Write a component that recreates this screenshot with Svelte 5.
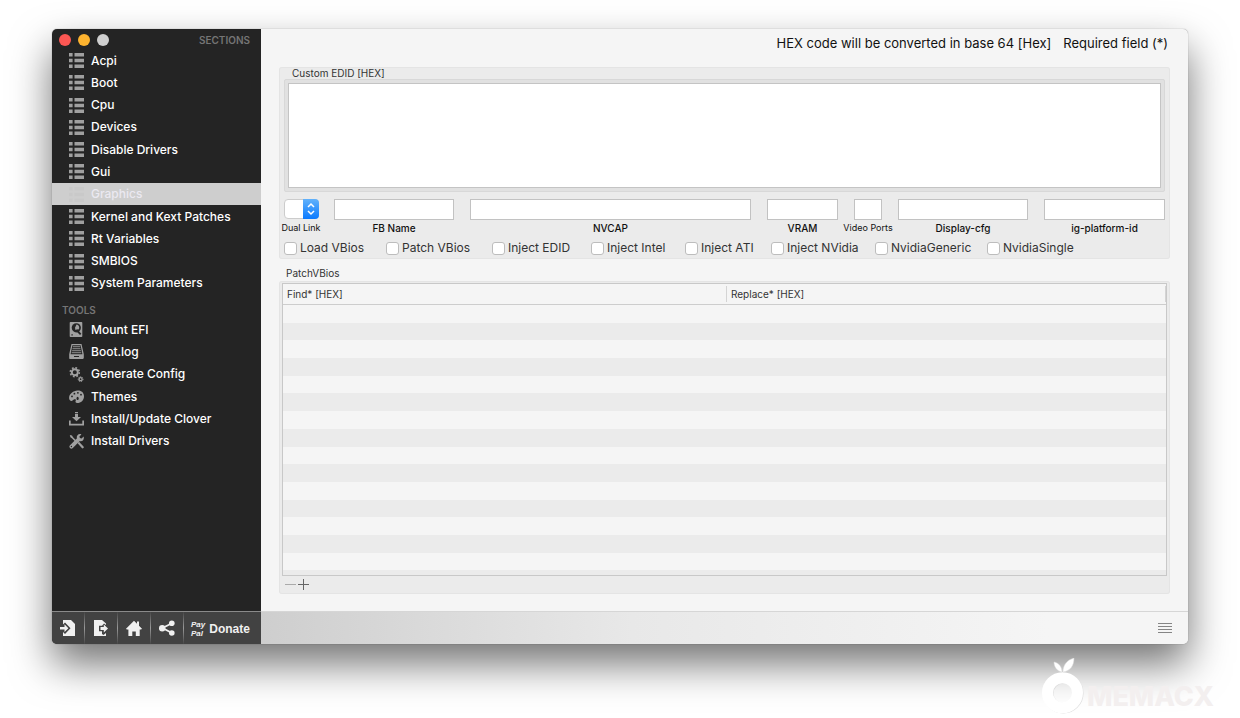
<script lang="ts">
    const sections = ['Acpi', 'Boot', 'Cpu', 'Devices', 'Disable Drivers', 'Gui', 'Graphics', 'Kernel and Kext Patches', 'Rt Variables', 'SMBIOS', 'System Parameters'];

    const tools = [
        { name: 'Mount EFI', icon: 'disk' },
        { name: 'Boot.log', icon: 'log' },
        { name: 'Generate Config', icon: 'gears' },
        { name: 'Themes', icon: 'palette' },
        { name: 'Install/Update Clover', icon: 'download' },
        { name: 'Install Drivers', icon: 'wrench' },
    ];

    const fields = [
        { id: 'fbname', label: 'FB Name' },
        { id: 'nvcap', label: 'NVCAP' },
        { id: 'vram', label: 'VRAM' },
        { id: 'ports', label: 'Video Ports', small: true },
        { id: 'display', label: 'Display-cfg' },
        { id: 'platform', label: 'ig-platform-id' },
    ];

    const checks = ['Load VBios', 'Patch VBios', 'Inject EDID', 'Inject Intel', 'Inject ATI', 'Inject NVidia', 'NvidiaGeneric', 'NvidiaSingle'];

    let active = 'Graphics';
</script>

<div class="page">
    <div class="window">
        <aside>
            <header>
                <div class="lights">
                    <button class="red" aria-label="Close"></button>
                    <button class="yellow" aria-label="Minimize"></button>
                    <button class="gray" aria-label="Zoom"></button>
                </div>
                <h2>SECTIONS</h2>
            </header>

            <nav class="sections">
                {#each sections as name}
                <button class="item" class:active={active === name} on:click={() => active = name}>
                    <svg viewBox="0 0 15 15" fill="currentColor">
                        <path d="M0 0h3.600v3.600H0zM5.500 0H15v3.600H5.500zM0 5.700h3.600v3.600H0zM5.500 5.700H15v3.600H5.500zM0 11.400h3.600V15H0zM5.500 11.400H15V15H5.500z" />
                    </svg>
                    {name}
                </button>
                {/each}
            </nav>

            <h2 class="toolsTitle">TOOLS</h2>

            <nav class="tools">
                {#each tools as tool}
                <button class="item">
                    <svg viewBox="0 0 15 15" fill="currentColor">
                        {#if tool.icon === 'disk'}
                        <path d="M1.500 0h11a.8.8 0 0 1 .8.8v13.400a.8.8 0 0 1-.8.8h-11a.8.8 0 0 1-.8-.8V.8A.8.8 0 0 1 1.500 0z" />
                        <circle cx="7.300" cy="5.800" r="4.600" fill="#242424" />
                        <path d="M7.500 2.500a3 3 0 0 1 2 5l-3 .6-.5-2.400z" />
                        <path d="M6.300 8.200l2-1 4 4.600-1.300 1.200z" fill="#242424" />
                        <path d="M2.400 12.200h1.400v1.200H2.400z" fill="#242424" />
                        {:else if tool.icon === 'log'}
                        <path fill-rule="evenodd" d="M2.500 0h10l2.300 10.300v3.500c0 .7-.4 1.200-1 1.200H1.200C.5 15 .2 14.600.2 13.900v-3.600zM3.400 1.200L1.600 10.200h11.800l-1.800-9z" />
                        <path d="M3.800 2h7.400v1.200H3.800zM3.500 4h8v1.200h-8zM3.100 6h8.800v1.200H3.100zM2.700 8h9.600v1.200H2.700z" opacity=".7" />
                        <path d="M5 12h5v1H5z" fill="#242424" />
                        {:else if tool.icon === 'gears'}
                        <circle cx="5.800" cy="5.200" r="3" fill="none" stroke="currentColor" stroke-width="1.900" />
                        <circle cx="5.800" cy="5.200" r="4.500" fill="none" stroke="currentColor" stroke-width="1.600" stroke-dasharray="1.770 1.764" />
                        <circle cx="11.600" cy="12.200" r="1.500" fill="none" stroke="currentColor" stroke-width="1.300" />
                        <circle cx="11.600" cy="12.200" r="2.400" fill="none" stroke="currentColor" stroke-width="1" stroke-dasharray="1.080 .805" />
                        {:else if tool.icon === 'palette'}
                        <path d="M8.500 1.500C12.300 1.200 15 3.700 15 7.200c0 4-3 6.800-6.800 6.800-1.600 0-2.100-1-1.500-2.200.6-1.300-.2-2-1.400-1.500-1.300.6-1.900 1.900-3.200 1.600C.7 11.600 0 10.200.1 8.500.4 4.700 4.400 1.800 8.500 1.500z" />
                        <g fill="#242424">
                            <circle cx="3" cy="7.400" r=".9" />
                            <circle cx="5.400" cy="4.700" r=".9" />
                            <circle cx="8.900" cy="3.800" r=".9" />
                            <circle cx="12" cy="5.700" r=".9" />
                            <ellipse cx="8.600" cy="9.400" rx="1.100" ry="1.600" />
                        </g>
                        {:else if tool.icon === 'download'}
                        <path d="M6 1h3v1.300H6zM6 3h3v3h3L7.500 10.300 3 6h3zM0 9.500h1.700v3.200h11.600V9.500H15v5H0z" />
                        {:else}
                        <path d="M.8.9L3 1.600l1 1.600 4 4-1.100 1.100-4-4L1.400 3.200z" />
                        <path d="M8.600 9.200L10 7.800l4.500 4.600c.5.600.3 1.200-.1 1.600-.5.500-1.100.6-1.600.1z" />
                        <path d="M14.600 2.600l-2 2-1.700-.5-.5-1.700L12.400.4C10.900-.2 9.300.2 8.500 1.200c-.8.900-.9 1.900-.5 3L1 11.200c-.9.900-.8 2 0 2.800.8.800 1.900.9 2.800 0l7-7c1.200.4 2.300.2 3.100-.6.9-.9 1.200-2.300.7-3.800zM2.400 13.200a.7.7 0 1 1 0-1.400.7.7 0 0 1 0 1.400z" />
                        {/if}
                    </svg>
                    {tool.name}
                </button>
                {/each}
            </nav>

            <footer>
                <button class="tool" aria-label="Import">
                    <svg viewBox="0 0 16 16" fill="currentColor">
                        <path d="M3 0h8l4 4v12H3v-4l2 2 5.500-5.800L5 2.500 3 4.500z" />
                        <path d="M0 7h4.500V4.300L8.400 8.200l-3.900 3.900V9.400H0z" />
                    </svg>
                </button>
                <button class="tool" aria-label="Export">
                    <svg viewBox="0 0 16 16" fill="currentColor">
                        <path d="M1 0h8l4 3.500V5l-2-1.500L9 5.800H6v5.400h3V14l1.500 1L13 13v3H1z" />
                        <path d="M7.500 7h3.300V4.600L15 8.500l-4.200 3.900V10H7.500z" />
                    </svg>
                </button>
                <button class="tool" aria-label="Home">
                    <svg viewBox="0 0 16 16" fill="currentColor">
                        <path d="M8 .8l3 3V1.500h2v4.200l3 3-.9.900H13.700V16H9.800v-4.600H6.300V16H2.400V9.600H.8L0 8.700z" />
                    </svg>
                </button>
                <button class="tool" aria-label="Share">
                    <svg viewBox="0 0 16 16" fill="currentColor">
                        <path d="M13 3.200L3.500 8l9.500 5" fill="none" stroke="currentColor" stroke-width="1.800" />
                        <circle cx="3.200" cy="8.200" r="3.200" />
                        <circle cx="12.800" cy="3.200" r="2.800" />
                        <circle cx="12.800" cy="13" r="2.800" />
                    </svg>
                </button>
                <button class="donate"><i>Pay<br />Pal</i> Donate</button>
            </footer>
        </aside>

        <main>
            <div class="notes">
                <span>HEX code will be converted in base 64 [Hex]</span>
                <span>Required field (*)</span>
            </div>

            <section class="box edid">
                <label class="caption" for="edid">Custom EDID [HEX]</label>
                <div class="well"><textarea id="edid"></textarea></div>

                <div class="fields">
                    <div class="field">
                        <div class="popup">
                            <select id="dual"><option></option></select>
                            <svg viewBox="0 0 16 20" fill="none" stroke="#fff" stroke-width="1.500">
                                <path d="M5 8l3-3 3 3M5 12l3 3 3-3" />
                            </svg>
                        </div>
                        <label class="small" for="dual">Dual Link</label>
                    </div>
                    {#each fields as field}
                    <div class="field">
                        <input type="text" id={field.id} />
                        <label class:small={field.small} for={field.id}>{field.label}</label>
                    </div>
                    {/each}
                </div>

                <div class="checks">
                    {#each checks as check}
                    <label><input type="checkbox" />{check}</label>
                    {/each}
                </div>
            </section>

            <h3>PatchVBios</h3>

            <section class="box patches">
                <div class="tableWrap">
                    <table>
                        <thead>
                            <tr><th>Find* [HEX]</th><th>Replace* [HEX]</th></tr>
                        </thead>
                        <tbody>
                            {#each Array(16) as _}
                            <tr><td></td><td></td></tr>
                            {/each}
                        </tbody>
                    </table>
                </div>
                <div class="edit">
                    <button class="remove" aria-label="Remove">
                        <svg viewBox="0 0 11 11" stroke="currentColor"><path d="M0 5.500h11" /></svg>
                    </button>
                    <button aria-label="Add">
                        <svg viewBox="0 0 11 11" stroke="currentColor"><path d="M0 5.500h11M5.500 0v11" /></svg>
                    </button>
                </div>
            </section>

            <footer class="status">
                <button aria-label="Menu">
                    <svg viewBox="0 0 14 12" stroke="currentColor"><path d="M0 1.500h14M0 4.500h14M0 7.500h14M0 10.500h14" /></svg>
                </button>
            </footer>
        </main>
    </div>

    <div class="watermark">
        <svg viewBox="0 0 42 56">
            <circle cx="21.300" cy="35.300" r="15" fill="none" stroke="#ddd" stroke-width="10.500" />
            <circle cx="20.500" cy="34.700" r="15" fill="none" stroke="#fff" stroke-width="11" />
            <path d="M20 14c-5-1-8-5-8-10 5 1 8 5 8 10zM21 14c0-7 4-12 11-14 0 8-4 13-11 14z" fill="#fff" stroke="#ddd" stroke-width=".5" />
        </svg>
        <span>MEMACX</span>
    </div>
</div>

<style>
    :global(body) {
        margin: 0;
        background: #fff;
    }

    .page {
        position: relative;
        box-sizing: border-box;
        min-height: 100vh;
        padding: 29px 52px 74px;
        overflow: hidden;

        font-family: Inter, "Liberation Sans", sans-serif;
        font-size: 12px;
        line-height: 16px;
        color: #111;
    }

    button {
        padding: 0;
        border: 0;
        background: none;
        font: inherit;
        color: inherit;
    }

    svg {
        display: block;
        flex: none;
    }

    h2, h3 {
        margin: 0;
    }

    .window {
        display: flex;
        border-radius: 5px;
        background: #f5f5f5;
        box-shadow: 0 0 1px rgba(0, 0, 0, 0.5), 0 20px 40px rgba(0, 0, 0, 0.55);
    }

    aside {
        display: flex;
        flex-direction: column;
        flex: none;
        width: 209px;
        border-radius: 5px 0 0 5px;
        background: #242424;
        color: #fff;
        overflow: hidden;
    }

    header {
        display: flex;
        align-items: center;
        justify-content: space-between;
        height: 18px;
        padding: 2px 11px 0 7px;
    }

    .lights {
        display: flex;
        gap: 7px;
    }

    .lights button {
        width: 12px;
        height: 12px;
        border-radius: 50%;
    }

    .red { background: #fc5753; }
    .yellow { background: #fdb32f; }
    .gray { background: #cfcfcf; }

    h2 {
        font-size: 10px;
        font-weight: 600;
        color: #757575;
    }

    .toolsTitle {
        padding: 8px 10px 0;
    }

    nav {
        display: grid;
        grid-auto-rows: 1fr;
    }

    .sections { height: 245px; }
    .tools { height: 134px; }

    .item {
        display: flex;
        align-items: center;
        gap: 7px;
        padding: 1px 0 0 17px;
        font-weight: 500;
        text-align: left;
        white-space: nowrap;
    }

    .item svg {
        width: 15px;
        height: 15px;
        color: #a0a0a0;
    }

    .item.active {
        background: #cecece;
        color: #ebe9f1;
    }

    .item.active svg {
        color: #c9c9c9;
    }

    aside footer {
        display: flex;
        height: 32px;
        margin-top: auto;
        border-top: 1px solid #8a8a8a;
        background: #424242;
        color: #f0f0f0;
    }

    .tool {
        display: grid;
        place-items: center;
        width: 33px;
        border-right: 1px solid;
        border-image: linear-gradient(#424242, #999, #424242) 1;
    }

    .tool svg {
        width: 16px;
        height: 16px;
    }

    .donate {
        display: flex;
        align-items: center;
        gap: 4px;
        padding: 2px 0 0 7px;
        font: bold 12px "Liberation Sans", sans-serif;
    }

    .donate i {
        font-size: 8px;
        line-height: 9px;
        text-align: left;
    }

    main {
        flex: 1;
        min-width: 0;
        display: flex;
        flex-direction: column;
    }

    .notes {
        display: flex;
        justify-content: flex-end;
        gap: 12px;
        padding: 6px 20px 16px;
        font-size: 13px;
    }

    .box {
        margin: 0 18px;
        border-radius: 3px;
        background: #ebebeb;
        box-shadow: inset 0 0 0 1px #e4e4e4;
    }

    .edid {
        padding: 0 5px;
    }

    .caption {
        display: block;
        padding-left: 8px;
        font-size: 10px;
        line-height: 12px;
        color: #333;
    }

    .well {
        padding: 3px;
        border: 1px solid #d8d8d8;
        border-radius: 2px;
        background: #e1e1e1;
    }

    textarea {
        display: block;
        box-sizing: border-box;
        width: 100%;
        height: 105px;
        border: 1px solid #c4c4c4;
        background: #fff;
        resize: none;
    }

    .fields {
        display: grid;
        grid-template-columns: 34px 120fr 281fr 71fr 28fr 130fr 121fr;
        gap: 16px;
        padding-top: 7px;
    }

    .field {
        display: flex;
        flex-direction: column;
        align-items: center;
        min-width: 0;
        font-size: 10px;
        font-weight: 500;
        white-space: nowrap;
    }

    .field input {
        box-sizing: border-box;
        width: 100%;
        height: 21px;
        padding: 0 3px;
        border: 1px solid #c2c2c2;
        background: #fff;
    }

    .field .small {
        font-size: 9px;
        font-weight: 400;
    }

    .popup {
        position: relative;
        width: 35px;
        height: 20px;
        padding-bottom: 1px;
    }

    select {
        width: 35px;
        height: 20px;
        border: 1px solid #ccc;
        border-radius: 4px;
        background: #fff;
        appearance: none;
    }

    .popup svg {
        position: absolute;
        top: 0;
        right: 0;
        width: 16px;
        height: 20px;
        border-radius: 0 4px 4px 0;
        background: linear-gradient(#62b2fb, #0a7aff);
        pointer-events: none;
    }

    .checks {
        display: grid;
        grid-template-columns: 102fr 106fr 99fr 94fr 86fr 104fr 112fr 178fr;
        padding: 4px 0 3px;
        color: #333;
    }

    .checks label {
        display: flex;
        align-items: center;
        gap: 3px;
        white-space: nowrap;
    }

    .checks input {
        flex: none;
        box-sizing: border-box;
        width: 13px;
        height: 13px;
        margin: 0;
        border: 1px solid #bdbdbd;
        border-radius: 3px;
        background: #fff;
        appearance: none;
    }

    h3 {
        padding: 7px 25px 0;
        font-size: 10px;
        line-height: 15px;
        font-weight: 400;
        color: #333;
    }

    .patches {
        padding: 2px 3px 0;
    }

    .tableWrap {
        box-sizing: border-box;
        height: 293px;
        border: 1px solid #c8c8c8;
        background: #f5f5f5;
        overflow: hidden;
    }

    table, thead {
        display: block;
    }

    /* the last row is cut off by the wrapper */
    tbody {
        display: grid;
        grid-auto-rows: 1fr;
        height: 283px;
    }

    tr {
        display: grid;
        grid-template-columns: 444fr 439fr;
    }

    th {
        position: relative;
        padding: 2px 4px;
        border-bottom: 1px solid #cdcdcd;
        font-size: 10px;
        font-weight: 400;
        text-align: left;
        color: #333;
    }

    th::after {
        content: "";
        position: absolute;
        top: 2px;
        right: 0;
        bottom: 2px;
        width: 1px;
        background: #d4d4d4;
    }

    td {
        padding: 0;
    }

    tbody tr:nth-child(even) {
        background: #ebebeb;
    }

    .edit {
        display: flex;
        gap: 2px;
        padding: 3px 3px 4px;
        color: #666;
    }

    .edit svg {
        width: 11px;
        height: 11px;
    }

    .remove {
        color: #aaa;
    }

    .status {
        display: flex;
        align-items: center;
        justify-content: flex-end;
        height: 32px;
        margin-top: 17px;
        padding-right: 16px;
        border-top: 1px solid #d6d6d6;
        border-radius: 0 0 5px 0;
        background: linear-gradient(90deg, #cecece, #e8e8e8 40%, #f5f5f5 85%);
        color: #858585;
    }

    .status svg {
        width: 14px;
        height: 12px;
    }

    .watermark {
        position: absolute;
        right: 26px;
        bottom: 4px;
        display: flex;
        align-items: flex-end;
        gap: 3px;
        color: #f3efef;
    }

    .watermark svg {
        width: 42px;
        height: 56px;
    }

    .watermark span {
        font-size: 27px;
        line-height: 34px;
        font-weight: 800;
    }
</style>
